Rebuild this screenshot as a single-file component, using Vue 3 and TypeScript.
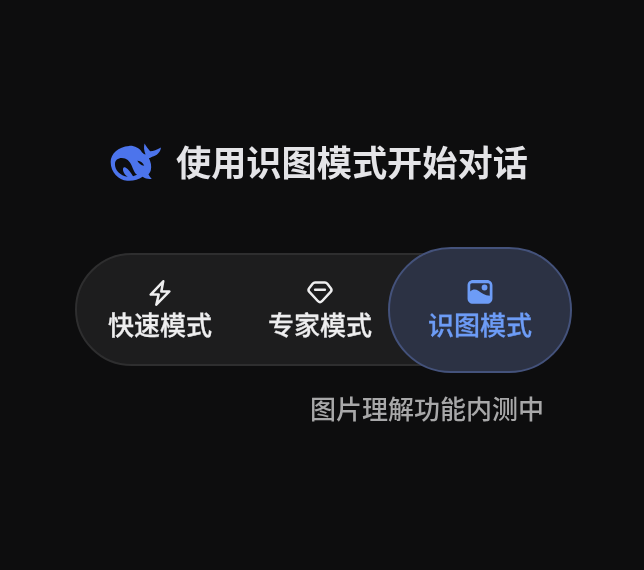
<template>
  <div class="page">
    <div class="title-row">
      <svg class="logo" viewBox="30 40 158 120" aria-hidden="true">
        <path
          fill="#4c74ec"
          fill-rule="evenodd"
          d="M32 97C32 72 55 50 88 48C104 47 118 54 127 67C130 71 134 73 138 74C133 62 132 52 135 41C140 49 145 57 152 64C162 64 172 60 185 53C183 68 172 78 158 81C154 84 151 85 148 85C154 97 157 110 154 122C152 129 148 132 147 135C150 140 154 145 157 148C148 150 138 148 129 142C116 152 100 155 82 154C56 152 32 128 32 97ZM45 103C45 92 54 85 66 85C80 85 90 94 96 108C100 118 104 130 112 136C108 138 104 139 100 140C94 131 86 119 77 114C71 111 68 116 70 124C72 132 78 138 84 142C60 138 45 122 45 103ZM113 93C117 101 124 107 134 108C130 99 122 92 113 93Z"
        />
      </svg>
      <h1 class="title">使用识图模式开始对话</h1>
    </div>

    <div class="mode-track">
      <div
        v-for="mode in modes"
        :key="mode.label"
        class="mode-item"
        :class="{ active: mode.active }"
      >
        <svg v-if="mode.icon === 'bolt'" class="mode-icon" viewBox="0 0 24 24" aria-hidden="true">
          <path class="line" d="M15 1.2 3.4 13.4H10.8L8.6 22.8 20.6 10.6H13.2L15 1.2Z" />
        </svg>
        <svg v-else-if="mode.icon === 'gem'" class="mode-icon" viewBox="0 0 24 24" aria-hidden="true">
          <path class="line" d="M7.4 2.4H16.6C17.5 2.4 18.2 2.8 18.8 3.5L22 7.6C22.8 8.6 22.7 9.9 21.8 10.9L13.8 19.6C12.8 20.6 11.2 20.6 10.2 19.6L2.2 10.9C1.3 9.9 1.2 8.6 2 7.6L5.2 3.5C5.8 2.8 6.5 2.4 7.4 2.4Z" />
          <path class="line" d="M7.5 8.9H16.5" />
        </svg>
        <svg v-else class="mode-icon" viewBox="0 0 24 24" aria-hidden="true">
          <path
            fill="currentColor"
            fill-rule="evenodd"
            d="M5.5 0H18.5C21.3 0 23.5 2.2 23.5 5V17C23.5 19.8 21.3 22 18.5 22H5.5C2.7 22 0.5 19.8 0.5 17V5C0.5 2.2 2.7 0 5.5 0ZM4.5 3C3.6 3 3 3.7 3 4.5V10.5C5.5 8.3 8 8.2 10.5 10C13.5 12.2 16.5 14.4 21 14.6V4.5C21 3.7 20.4 3 19.5 3H4.5ZM16.2 4.2A2.7 2.7 0 1 0 16.2 9.6A2.7 2.7 0 1 0 16.2 4.2Z"
          />
        </svg>
        <span class="mode-label">{{ mode.label }}</span>
      </div>
    </div>

    <p class="hint">图片理解功能内测中</p>
  </div>
</template>

<script setup lang="ts">
type Mode = {
  label: string;
  icon: "bolt" | "gem" | "image";
  active?: boolean;
};

const modes: Mode[] = [
  { label: "快速模式", icon: "bolt" },
  { label: "专家模式", icon: "gem" },
  { label: "识图模式", icon: "image", active: true },
];
</script>

<style>
html,
body {
  margin: 0;
  background: #0d0d0e;
}
</style>

<style scoped>
.page {
  width: 644px;
  height: 570px;
  box-sizing: border-box;
  padding-top: 141px;
  padding-left: 75px;
  background: #0d0d0e;
  font-family: "Noto Sans CJK SC", "Liberation Sans", sans-serif;
  overflow: hidden;
  filter: blur(0.4px);
}

.title-row {
  display: flex;
  align-items: center;
  gap: 14px;
  height: 44px;
  margin-left: 35px;
}

.logo {
  width: 52px;
  height: 40px;
  flex: none;
}

.title {
  margin: 0 0 4px;
  font-size: 35.2px;
  line-height: 44px;
  font-weight: 700;
  color: #e4e4e7;
  white-space: nowrap;
}

.mode-track {
  display: flex;
  align-items: center;
  width: 486px;
  height: 113px;
  box-sizing: border-box;
  margin-top: 68px;
  padding-left: 3px;
  background: #1d1d1e;
  border: 2px solid #2e2e2f;
  border-radius: 57px;
}

.mode-item {
  display: flex;
  flex-direction: column;
  align-items: center;
  justify-content: center;
  gap: 3px;
  flex: none;
  width: 160px;
  height: 100%;
  padding-bottom: 1px;
  box-sizing: border-box;
  color: #eeeeef;
}

.mode-item.active {
  width: 184px;
  height: 126px;
  margin-left: -12px;
  background: #2c3244;
  border: 2px solid #44527b;
  border-radius: 63px;
  color: #6d9cf6;
}

.mode-icon {
  width: 26px;
  height: 26px;
  color: inherit;
}

.line {
  fill: none;
  stroke: currentColor;
  stroke-width: 2.3;
  stroke-linejoin: round;
  stroke-linecap: round;
}

.mode-label {
  font-size: 26px;
  line-height: 30px;
  font-weight: 500;
  -webkit-text-stroke: 0.3px currentColor;
}

.hint {
  margin: 23px 0 0 235px;
  font-size: 26px;
  line-height: 38px;
  font-weight: 500;
  color: #a8a8a9;
  white-space: nowrap;
}
</style>
